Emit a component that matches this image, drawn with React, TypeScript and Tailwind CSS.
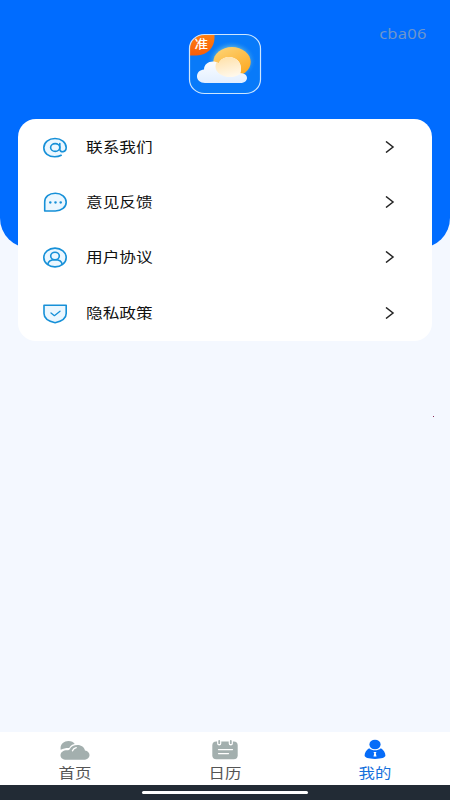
import type { ReactNode } from "react";

const font = "font-['Noto_Sans_CJK_SC',sans-serif]";

function Logo() {
  return (
    <svg width="74" height="62" viewBox="0 0 74 62" aria-hidden="true">
      <defs>
        <clipPath id="frame"><rect x="1.500" y="1.500" width="71" height="59" rx="15" ry="14" /></clipPath>
        <linearGradient id="sun" x1="0" y1="0" x2="0.6" y2="1">
          <stop offset="0" stopColor="#fdd67a" /><stop offset="1" stopColor="#fdaa24" />
        </linearGradient>
        <linearGradient id="cloud" x1="0" y1="0" x2="0" y2="1">
          <stop offset="0" stopColor="#ffffff" /><stop offset="1" stopColor="#e2efff" />
        </linearGradient>
        <linearGradient id="badge" x1="0" y1="0" x2="0" y2="1">
          <stop offset="0" stopColor="#ff8213" /><stop offset="1" stopColor="#f75d08" />
        </linearGradient>
        <radialGradient id="glow"><stop offset="0.65" stopColor="#8fd5d0" stopOpacity="0.65" /><stop offset="1" stopColor="#188af5" stopOpacity="0" /></radialGradient>
        <linearGradient id="warm" x1="0.2" y1="0" x2="0.5" y2="1"><stop offset="0" stopColor="#ffe0a6" /><stop offset="1" stopColor="#fff8eb" /></linearGradient>
        <clipPath id="cloudClip"><path d="M17 50c-5 0-8-3-8-6.500 0-4 3-6.700 7-7 0-5 4-8 9-8 2 0 4 .6 5.500 1.800 2-4 6-6.300 10.500-6.300 7 0 12 5 12 11.500 0 1.500-.2 3-.8 4.700 4.300 0 6.800 2 6.800 4.800 0 3-3 5-7 5Z" /></clipPath>
      </defs>
      <g clipPath="url(#frame)">
        <path fill="#087af9" d="M0 0h74v62H0Z" />
        <ellipse cx="43.500" cy="28" rx="24" ry="20" fill="url(#glow)" />
        <ellipse cx="44" cy="29" rx="18.700" ry="15" fill="url(#sun)" />
        <path fill="url(#cloud)" d="M17 50c-5 0-8-3-8-6.500 0-4 3-6.700 7-7 0-5 4-8 9-8 2 0 4 .6 5.500 1.800 2-4 6-6.300 10.500-6.300 7 0 12 5 12 11.500 0 1.500-.2 3-.8 4.700 4.300 0 6.800 2 6.800 4.800 0 3-3 5-7 5Z" />
        <ellipse cx="42" cy="33.500" rx="14.500" ry="10.500" fill="url(#warm)" clipPath="url(#cloudClip)" />
        <path fill="url(#badge)" d="M0 0h26.500v5c0 9-7 17.500-18 17.500H0Z" />
      </g>
      <rect x="1.500" y="1.500" width="71" height="59" rx="15" ry="14" fill="none" stroke="#cce6ff" strokeWidth="1.200" />
      <text x="6.500" y="16" fontSize="12" fontWeight="500" fill="#fff" textLength="13.500" lengthAdjust="spacingAndGlyphs" className={font}>准</text>
    </svg>
  );
}

const icons: Record<string, ReactNode> = {
  at: (
    <>
      <ellipse cx="12" cy="10.500" rx="11" ry="9" fill="#ebf7ff" stroke="none" />
      <ellipse cx="12.200" cy="10.500" rx="4.600" ry="3.900" />
      <path d="M16.800 6.600v5.700c0 3.600 6.400 3.300 6.400-1.800 0-5.200-5-9-11.200-9S.8 5.400.8 10.800s4.900 9 10.900 9c2.500 0 4.700-.5 6.500-1.500" />
    </>
  ),
  chat: (
    <>
      <path fill="#ebf7ff" d="M1.700 19V10C1.700 4.700 6.100 1.300 12.300 1.300S23.200 5.200 23.200 10.200 18.500 19 12.300 19Z" />
      <g fill="#1690d8" stroke="none"><ellipse cx="7.300" cy="10.500" rx="1.300" ry="1.150" /><ellipse cx="12.500" cy="10.500" rx="1.300" ry="1.150" /><ellipse cx="17.700" cy="10.500" rx="1.300" ry="1.150" /></g>
    </>
  ),
  user: (
    <>
      <ellipse cx="12" cy="10.500" rx="11.200" ry="9.400" fill="#ebf7ff" />
      <ellipse cx="12" cy="9" rx="4.300" ry="3.800" />
      <path d="M4.800 17.500c.4-3.100 3.100-4.700 7.200-4.700s6.800 1.600 7.200 4.700" />
    </>
  ),
  shield: (
    <>
      <path fill="#ebf7ff" d="M1 2.200h22.200v8.200c0 4.500-3.700 7.600-11.100 9.300C4.700 18 1 14.900 1 10.400Z" />
      <path strokeWidth="1.300" d="m8 10 3.400 2.700 5.600-4.500" />
    </>
  ),
};

const rows = [
  { label: "联系我们", icon: "at" },
  { label: "意见反馈", icon: "chat" },
  { label: "用户协议", icon: "user" },
  { label: "隐私政策", icon: "shield" },
];

function Row({ label, icon }: { label: string; icon: string }) {
  return (
    <button className="flex w-full items-center pr-[37px] pl-[25px] text-left">
      <svg className="mt-px" width="24" height="21" viewBox="0 0 24 21" fill="none" stroke="#1690d8" strokeWidth="1.600" strokeLinecap="round" strokeLinejoin="round">
        {icons[icon]}
      </svg>
      <span className="mb-[2px] ml-[19px] flex-1 origin-left scale-x-[1.19] text-[14px] leading-5 text-[#111]">{label}</span>
      <svg width="10" height="12" viewBox="0 0 10 12" fill="none" stroke="#242424" strokeWidth="1.500">
        <path d="m1 .5 7 5.500-7 5.500" />
      </svg>
    </button>
  );
}

function CloudIcon() {
  return (
    <svg width="30" height="21" viewBox="0 0 30 21">
      <path fill="#a3afae" d="M.7 10.800C-.2 5.500 3.600 2 8.400 2c3 0 5.300 1.300 6.300 2.900-2.800.4-4.700 1.900-5.500 4.200-3.200-.1-5.900.6-8.500 1.700Z" />
      <path fill="#a3afae" d="M6.500 20.800C2.800 20.800.5 18.900.5 16.200c0-3 2.800-5 6.500-5 1.500 0 2.600-.1 3-1.500C11 7.400 14 5.900 17.500 5.900c4 0 6.700 2.300 7.500 5.500 2.900.5 4.500 2.300 4.500 4.600 0 3-2.400 4.800-6 4.800Z" />
      <path d="M12.500 11.800c.7-1.700 1.700-2.600 3.700-3.200" fill="none" stroke="#fff" strokeWidth="1.400" strokeLinecap="round" />
    </svg>
  );
}

function CalendarIcon() {
  return (
    <svg width="30" height="21" viewBox="0 0 30 21">
      <rect x="2.300" y="2.500" width="25.400" height="17.800" rx="4" fill="#a3afae" />
      <g strokeLinecap="round" fill="none">
        <path d="M9.200 1.500v3M20.800 1.500v3" stroke="#fff" strokeWidth="4.200" />
        <path d="M9.200 2v2.200M20.800 2v2.200" stroke="#a3afae" strokeWidth="1.800" />
        <path d="M8.500 10.600h14M8.500 14.600h10" stroke="#fff" strokeWidth="1.300" />
      </g>
    </svg>
  );
}

function PersonIcon() {
  return (
    <svg width="30" height="21" viewBox="0 0 30 21" fill="#066cf8">
      <ellipse cx="15" cy="5.500" rx="5.600" ry="4.800" />
      <path d="M9.100 9.200c3.200 2.800 8.600 2.800 11.800 0 2.800 1.700 4.500 4.500 4.500 7.400 0 2-3.900 3.300-10.400 3.300S4.600 18.600 4.600 16.600c0-2.900 1.700-5.700 4.500-7.400Z" />
      <path fill="#fff" d="M13.400 13h3.100l-.7 1.300.7 3.200h-3l.7-3.200Z" />
    </svg>
  );
}

function Tab({ label, active, children }: { label: string; active?: boolean; children: ReactNode }) {
  return (
    <button className={`flex flex-col items-center pt-[7px] ${active ? "text-[#1671dc]" : "text-[#555]"}`}>
      {children}
      <span className="mt-[2px] scale-x-[1.17] text-[14px] leading-5">{label}</span>
    </button>
  );
}

export default function App() {
  return (
    <div className={`flex h-[800px] w-[450px] flex-col overflow-hidden bg-[#f4f8ff] ${font}`}>
      <header className="h-[248px] shrink-0 rounded-b-[30px] bg-[#006cff]">
        <div className="grid h-[119px] grid-cols-3 items-start">
          <span />
          <div className="flex justify-center pt-[33px]"><Logo /></div>
          <span className="origin-right scale-x-[1.18] justify-self-end pt-[24px] pr-[20px] font-['Noto_Sans',sans-serif] text-[14px] leading-5 tracking-[0.200px] text-[#6c96cd]">cba06</span>
        </div>
        <section className="mx-[18px] grid h-[221.500px] grid-rows-4 rounded-[18px] bg-white">
          {rows.map((row) => <Row key={row.icon} {...row} />)}
        </section>
      </header>
      <main className="flex flex-1 items-start justify-end pt-[168px] pr-[16px]">
        <span className="size-px bg-[#8b2855]" />
      </main>
      <nav className="grid h-[53px] shrink-0 grid-cols-3 bg-white">
        <Tab label="首页"><CloudIcon /></Tab>
        <Tab label="日历"><CalendarIcon /></Tab>
        <Tab label="我的" active><PersonIcon /></Tab>
      </nav>
      <footer className="flex h-[15px] shrink-0 justify-center bg-[#222b35] pt-[6px]">
        <div className="h-[3px] w-[166px] rounded-full bg-white" />
      </footer>
    </div>
  );
}
